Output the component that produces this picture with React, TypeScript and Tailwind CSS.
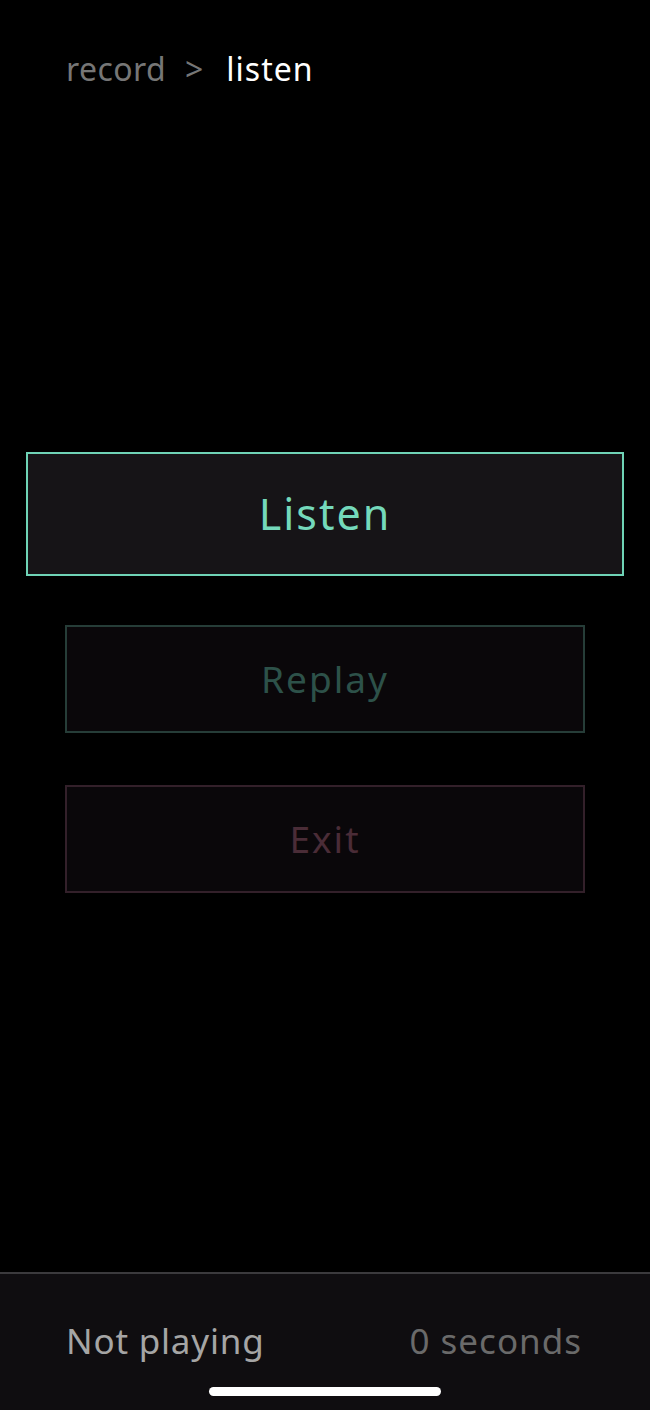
export default function App() {
  return (
    <div
      className="relative flex flex-col w-[650px] h-[1410px] bg-black overflow-hidden"
      style={{ fontFamily: '"Noto Sans", "Open Sans", sans-serif' }}
    >
      {/* Breadcrumb */}
      <div className="flex items-baseline pl-[66px] pt-[53px] h-[120px] text-[32px] leading-none">
        <span className="text-[#767676] tracking-[0.4px]">record</span>
        <span className="text-[#767676] ml-[19px]">&gt;</span>
        <span className="text-white ml-[23px] tracking-[1px]">listen</span>
      </div>

      {/* Actions */}
      <div className="flex flex-col items-center pt-[332px] flex-1">
        <button className="w-[598px] h-[124px] border-2 border-[#6fd3b6] bg-[#161417] text-[#74d9bb] text-[43px] tracking-[2px] flex items-center justify-center">
          Listen
        </button>
        <button className="mt-[49px] w-[520px] h-[108px] border-2 border-[#263d38] bg-[#0a070a] text-[#2d5149] text-[37px] tracking-[2px] flex items-center justify-center">
          Replay
        </button>
        <button className="mt-[52px] w-[520px] h-[108px] border-2 border-[#33202a] bg-[#0a070a] text-[#4a2c37] text-[37px] tracking-[2px] flex items-center justify-center">
          Exit
        </button>
      </div>

      {/* Footer */}
      <div className="h-[138px] border-t-2 border-[#3b3a3d] bg-[#0f0d10] flex flex-col">
        <div className="flex items-center justify-between px-[66px] pt-[49px] text-[35px] leading-none">
          <span className="text-[#a5a5a5] tracking-[0.8px]">Not playing</span>
          <span className="text-[#6a6a6a] tracking-[1px] mr-[2px]">0 seconds</span>
        </div>
        <div className="mt-auto mb-[14px] mx-auto w-[232px] h-[9px] rounded-full bg-white" />
      </div>
    </div>
  )
}
